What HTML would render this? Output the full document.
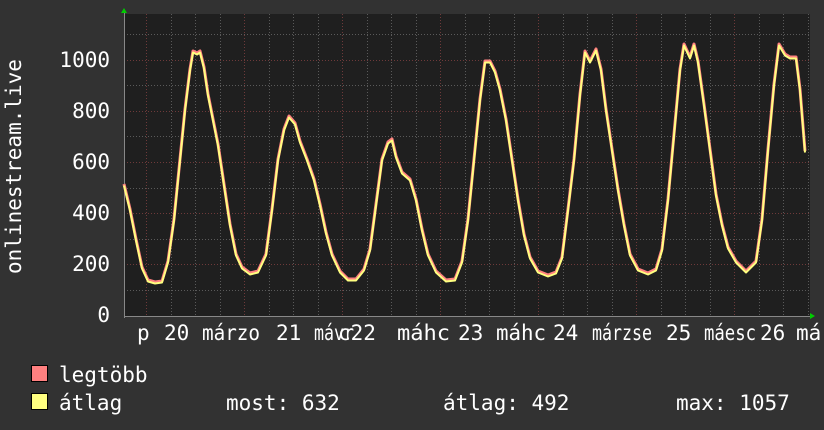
<!DOCTYPE html>
<html><head><meta charset="utf-8"><style>
html,body{margin:0;padding:0;background:#323232;}
svg{display:block}
text{font-family:"DejaVu Sans Mono","Liberation Mono",monospace;fill:#fff;}
</style></head><body>
<svg width="824" height="430" viewBox="0 0 824 430" xmlns="http://www.w3.org/2000/svg">
<defs>
<polyline id="l" fill="none" stroke-linejoin="round" points="124,185 130,210 136,240 142,268 148,281 155,283 162,282 168,262 174,220 180,160 185,110 190,70 193,52 197,54 200,52 204,68 208,95 213,120 218,145 224,185 230,225 236,255 242,268 250,274 258,272 266,255 272,210 278,160 284,130 289,117 295,124 300,142 307,160 314,180 320,205 326,233 332,255 340,272 348,280 356,280 364,270 370,250 376,205 382,160 388,143 392,140 396,157 402,173 410,180 416,200 422,230 428,255 436,272 446,281 455,280 462,262 468,220 474,160 480,100 485,62 490,62 495,72 500,90 506,120 512,160 518,200 524,235 530,258 538,272 548,276 556,273 562,258 568,210 574,160 580,95 585,52 590,62 596,50 601,70 606,110 612,150 618,190 624,225 630,255 638,270 648,274 656,270 662,250 668,200 674,135 680,70 684,45 690,58 694,45 698,62 704,105 710,150 716,195 722,225 728,248 736,262 746,272 756,262 762,220 768,150 774,85 779,45 785,55 790,58 796,58 800,90 805,152"/>
</defs>
<rect width="824" height="430" fill="#323232"/>
<rect x="124" y="14" width="686" height="302" fill="#1f1f1f"/>
<g stroke="#5a5a5a" stroke-width="1" stroke-dasharray="1,2">
<line x1="124" y1="290.5" x2="810" y2="290.5"/><line x1="124" y1="239.5" x2="810" y2="239.5"/>
<line x1="124" y1="188.5" x2="810" y2="188.5"/><line x1="124" y1="136.5" x2="810" y2="136.5"/>
<line x1="124" y1="85.5" x2="810" y2="85.5"/><line x1="124" y1="34.5" x2="810" y2="34.5"/>
<line x1="171.5" y1="14" x2="171.5" y2="316"/><line x1="195.5" y1="14" x2="195.5" y2="316"/><line x1="220.5" y1="14" x2="220.5" y2="316"/>
<line x1="269.5" y1="14" x2="269.5" y2="316"/><line x1="293.5" y1="14" x2="293.5" y2="316"/><line x1="318.5" y1="14" x2="318.5" y2="316"/>
<line x1="367.5" y1="14" x2="367.5" y2="316"/><line x1="391.5" y1="14" x2="391.5" y2="316"/><line x1="416.5" y1="14" x2="416.5" y2="316"/>
<line x1="465.5" y1="14" x2="465.5" y2="316"/><line x1="489.5" y1="14" x2="489.5" y2="316"/><line x1="514.5" y1="14" x2="514.5" y2="316"/>
<line x1="563.5" y1="14" x2="563.5" y2="316"/><line x1="587.5" y1="14" x2="587.5" y2="316"/><line x1="612.5" y1="14" x2="612.5" y2="316"/>
<line x1="661.5" y1="14" x2="661.5" y2="316"/><line x1="685.5" y1="14" x2="685.5" y2="316"/><line x1="710.5" y1="14" x2="710.5" y2="316"/>
<line x1="759.5" y1="14" x2="759.5" y2="316"/><line x1="783.5" y1="14" x2="783.5" y2="316"/><line x1="808.5" y1="14" x2="808.5" y2="316"/>
</g>
<g stroke="#6e3a3a" stroke-width="1" stroke-dasharray="1,2">
<line x1="124" y1="264.5" x2="810" y2="264.5"/><line x1="124" y1="213.5" x2="810" y2="213.5"/>
<line x1="124" y1="162.5" x2="810" y2="162.5"/><line x1="124" y1="111.5" x2="810" y2="111.5"/>
<line x1="124" y1="60.5" x2="810" y2="60.5"/>
<line x1="146.5" y1="14" x2="146.5" y2="316"/><line x1="244.5" y1="14" x2="244.5" y2="316"/><line x1="342.5" y1="14" x2="342.5" y2="316"/>
<line x1="440.5" y1="14" x2="440.5" y2="316"/><line x1="538.5" y1="14" x2="538.5" y2="316"/><line x1="636.5" y1="14" x2="636.5" y2="316"/>
<line x1="734.5" y1="14" x2="734.5" y2="316"/>
</g>
<line x1="124" y1="316.5" x2="812" y2="316.5" stroke="#888"/>
<line x1="124.5" y1="12" x2="124.5" y2="318" stroke="#888"/>
<polygon points="121,13 124,8 127,13" fill="#0c0"/>
<polygon points="810,313 815,316 810,319" fill="#0c0"/>
<use href="#l" stroke="#ff8080" stroke-width="3" transform="translate(0,-1)"/>
<use href="#l" stroke="#ffff80" stroke-width="2" transform="translate(0,0.5)"/>
<g font-size="21" text-anchor="end">
<text x="110" y="67">1000</text><text x="110" y="118">800</text><text x="110" y="169">600</text>
<text x="110" y="220">400</text><text x="110" y="271">200</text><text x="110" y="322">0</text>
</g>
<text font-size="21" transform="translate(21,274) rotate(-90)">onlinestream.live</text>
<g font-size="21">
<text x="137" y="340">p</text><text x="164" y="340">20</text><text x="202" y="340" textLength="58" lengthAdjust="spacingAndGlyphs">márzo</text>
<text x="276" y="340">21</text><text x="314" y="340" textLength="40" lengthAdjust="spacingAndGlyphs">mávr</text><text x="338" y="340">c22</text>
<text x="397" y="340" textLength="53" lengthAdjust="spacingAndGlyphs">máhc</text><text x="458" y="340">23</text><text x="496" y="340" textLength="50" lengthAdjust="spacingAndGlyphs">máhc</text><text x="553" y="340">24</text>
<text x="592" y="340" textLength="60" lengthAdjust="spacingAndGlyphs">márzse</text><text x="666" y="340">25</text><text x="704" y="340" textLength="52" lengthAdjust="spacingAndGlyphs">máesc</text><text x="760" y="340">26</text><text x="796" y="340">má</text>
</g>
<rect x="31.5" y="365.5" width="16" height="16" fill="#ff8080" stroke="#000"/>
<rect x="31.5" y="393.5" width="16" height="16" fill="#ffff80" stroke="#000"/>
<g font-size="21">
<text x="59" y="382">legtöbb</text>
<text x="59" y="410">átlag</text>
<text x="226" y="410">most: 632</text>
<text x="443" y="410">átlag: 492</text>
<text x="676" y="410">max: 1057</text>
</g>
</svg>
</body></html>
